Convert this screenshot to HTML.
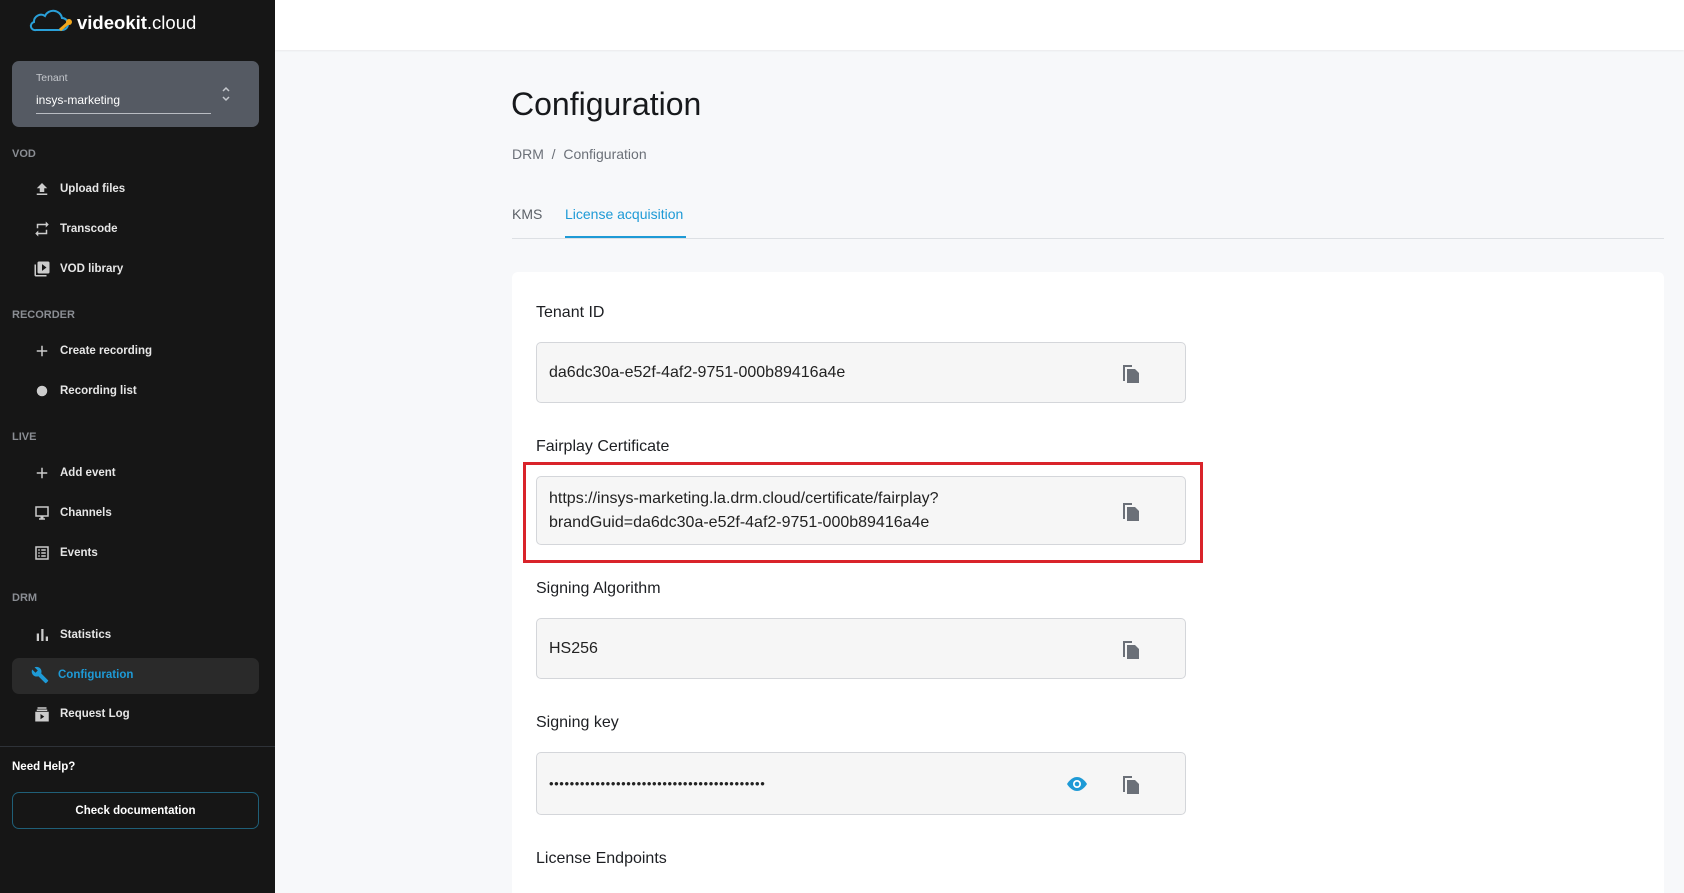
<!DOCTYPE html>
<html style="overflow:hidden;height:893px"><head><meta charset="utf-8"><style>
*{box-sizing:border-box;margin:0;padding:0}
body{width:1684px;height:893px;overflow:hidden;background:#f7f8fa;font-family:"Liberation Sans",sans-serif;position:relative}
.sb{position:absolute;left:0;top:0;width:275px;height:893px;background:#161616;color:#e8e8e8}
.a{position:absolute}
.sec{position:absolute;left:12px;font-size:11px;font-weight:bold;color:#8a8d93}
.it{position:absolute;left:60px;font-size:11.5px;font-weight:bold;color:#e6e6e6;transform:translateY(-50%)}
.ic{position:absolute;left:33px;width:18px;height:18px;transform:translateY(-50%)}
.lbl{position:absolute;left:536px;font-size:16px;color:#1d1f23;transform:translateY(-50%)}
.box{position:absolute;left:536px;width:650px;background:#f6f6f6;border:1px solid #d4d6da;border-radius:5px;font-size:16px;color:#222;padding-left:12px;display:flex;align-items:center}
.cp{position:absolute;left:1120px;width:20px;height:22px;transform:translateY(-50%)}
</style></head><body>
<div class="sb">
 <svg class="a" style="left:28px;top:8px" width="48" height="26" viewBox="0 0 48 26"><path d="M8 22 H34 A6 6 0 0 0 34 10 A9 9 0 0 0 17 8 A7 7 0 0 0 6 14 A4 4 0 0 0 8 22Z" fill="none" stroke="#2aa0d8" stroke-width="2"/><path d="M32 22 L40 15" stroke="#f2a81d" stroke-width="3"/><circle cx="41" cy="14" r="3" fill="#f2a81d"/></svg>
 <div class="a" style="left:77px;top:12px;font-size:18.5px;color:#fff"><b>videokit</b>.cloud</div>
 <div class="a" style="left:12px;top:61px;width:247px;height:66px;background:#555a63;border-radius:7px">
  <div class="a" style="left:24px;top:11px;font-size:10.5px;color:#c5c8cd">Tenant</div>
  <div class="a" style="left:24px;top:32px;font-size:12px;color:#fff">insys-marketing</div>
  <div class="a" style="left:24px;top:52px;width:175px;height:1px;background:#b9bcc2"></div>
  <svg class="a" style="left:209px;top:24px" width="10" height="18" viewBox="0 0 10 18"><path d="M2 6l3-3 3 3M2 12l3 3 3-3" fill="none" stroke="#c5c8cd" stroke-width="1.5"/></svg>
 </div>
 <div class="sec" style="top:148px">VOD</div>
 <svg class="ic" style="top:189px" viewBox="0 0 24 24"><path d="M5 20h14v-2H5zM12 4l-7 7h4v5h6v-5h4z" fill="#ccc"/></svg><div class="it" style="top:189px">Upload files</div>
 <svg class="ic" style="top:229px" viewBox="0 0 24 24"><path d="M7 7h10v3l4-4-4-4v3H5v6h2zM17 17H7v-3l-4 4 4 4v-3h12v-6h-2z" fill="#ccc"/></svg><div class="it" style="top:229px">Transcode</div>
 <svg class="ic" style="top:269px" viewBox="0 0 24 24"><path d="M4 6H2v14a2 2 0 0 0 2 2h14v-2H4zm16-4H8a2 2 0 0 0-2 2v12a2 2 0 0 0 2 2h12a2 2 0 0 0 2-2V4a2 2 0 0 0-2-2zm-8 12.5v-9l6 4.5z" fill="#ccc"/></svg><div class="it" style="top:269px">VOD library</div>
 <div class="sec" style="top:309px">RECORDER</div>
 <svg class="ic" style="top:351px" viewBox="0 0 24 24"><path d="M19 13h-6v6h-2v-6H5v-2h6V5h2v6h6z" fill="#ccc"/></svg><div class="it" style="top:351px">Create recording</div>
 <svg class="ic" style="top:391px" viewBox="0 0 24 24"><circle cx="12" cy="12" r="7" fill="#ccc"/></svg><div class="it" style="top:391px">Recording list</div>
 <div class="sec" style="top:431px">LIVE</div>
 <svg class="ic" style="top:473px" viewBox="0 0 24 24"><path d="M19 13h-6v6h-2v-6H5v-2h6V5h2v6h6z" fill="#ccc"/></svg><div class="it" style="top:473px">Add event</div>
 <svg class="ic" style="top:513px" viewBox="0 0 24 24"><path d="M21 3H3v14h7v2H8v2h8v-2h-2v-2h7zm-2 12H5V5h14z" fill="#ccc"/></svg><div class="it" style="top:513px">Channels</div>
 <svg class="ic" style="top:553px" viewBox="0 0 24 24"><path d="M3 3v18h18V3zm16 16H5V5h14zM7 7h2v2H7zm4 0h6v2h-6zm-4 4h2v2H7zm4 0h6v2h-6zm-4 4h2v2H7zm4 0h6v2h-6z" fill="#ccc"/></svg><div class="it" style="top:553px">Events</div>
 <div class="sec" style="top:592px">DRM</div>
 <svg class="ic" style="top:635px" viewBox="0 0 24 24"><path d="M5 10h3v10H5zm6-6h3v16h-3zm6 10h3v6h-3z" fill="#ccc"/></svg><div class="it" style="top:635px">Statistics</div>
 <div class="a" style="left:12px;top:658px;width:247px;height:36px;background:#2a2a2a;border-radius:7px"></div>
 <svg class="ic" style="top:675px;left:31px" viewBox="0 0 24 24"><path d="M22.7 19l-9.1-9.1c.9-2.3.4-5-1.5-6.9-2-2-5-2.4-7.4-1.3L9 6 6 9 1.6 4.7C.4 7.1.9 10.1 2.9 12.1c1.9 1.9 4.6 2.4 6.9 1.5l9.1 9.1c.4.4 1 .4 1.4 0l2.3-2.3c.5-.4.5-1.1.1-1.4z" fill="#1e9ad6"/></svg><div class="it" style="top:675px;left:58px;color:#1e9ad6">Configuration</div>
 <svg class="ic" style="top:714px" viewBox="0 0 24 24"><path d="M6 3h12v2H6zm-1 3h14v2H5zM3 9h18v13H3zm7 3v7l5-3.5z" fill="#ccc"/></svg><div class="it" style="top:714px">Request Log</div>
 <div class="a" style="left:0;top:746px;width:275px;height:1px;background:#2e3238"></div>
 <div class="a" style="left:12px;top:761px;font-size:11.5px;font-weight:bold;color:#fff">Need Help?</div>
 <div class="a" style="left:12px;top:792px;width:247px;height:37px;border:1px solid #1f5f78;border-radius:7px;font-size:11.5px;font-weight:bold;color:#fff;display:flex;align-items:center;justify-content:center">Check documentation</div>
</div>
<div class="a" style="left:275px;top:0;width:1409px;height:50px;background:#fff;box-shadow:0 1px 2px rgba(0,0,0,.06)"></div>
<div class="a" style="left:511px;top:86px;font-size:32px;color:#17191c">Configuration</div>
<div class="a" style="left:512px;top:146px;font-size:14px;color:#6b7078">DRM &nbsp;/&nbsp; Configuration</div>
<div class="a" style="left:512px;top:206px;font-size:14px;color:#5c6168">KMS</div>
<div class="a" style="left:565px;top:206px;font-size:14px;color:#1e9ad6">License acquisition</div>
<div class="a" style="left:512px;top:238px;width:1152px;height:1px;background:#dde0e4"></div>
<div class="a" style="left:565px;top:236px;width:121px;height:2px;background:#1e9ad6"></div>
<div class="a" style="left:512px;top:272px;width:1152px;height:621px;background:#fff;border-radius:6px 6px 0 0"></div>
<div class="lbl" style="top:313px">Tenant ID</div>
<div class="box" style="top:342px;height:61px">da6dc30a-e52f-4af2-9751-000b89416a4e</div>
<div class="lbl" style="top:447px">Fairplay Certificate</div>
<div class="box" style="top:476px;height:69px;line-height:24px">https://insys-marketing.la.drm.cloud/certificate/fairplay?<br>brandGuid=da6dc30a-e52f-4af2-9751-000b89416a4e</div>
<div class="a" style="left:523px;top:462px;width:680px;height:101px;border:3px solid #d9232a"></div>
<div class="lbl" style="top:589px">Signing Algorithm</div>
<div class="box" style="top:618px;height:61px">HS256</div>
<div class="lbl" style="top:723px">Signing key</div>
<div class="box" style="top:752px;height:63px;font-size:13px;letter-spacing:.6px">••••••••••••••••••••••••••••••••••••••••••</div>
<div class="lbl" style="top:859px">License Endpoints</div>
<svg class="cp" style="top:373px" viewBox="0 0 20 22"><path d="M3 3h9v2H5v14H3z" fill="#6b7078"/><path d="M7 7h8l4 4v10H7z" fill="#6b7078"/></svg>
<svg class="cp" style="top:511px" viewBox="0 0 20 22"><path d="M3 3h9v2H5v14H3z" fill="#6b7078"/><path d="M7 7h8l4 4v10H7z" fill="#6b7078"/></svg>
<svg class="cp" style="top:649px" viewBox="0 0 20 22"><path d="M3 3h9v2H5v14H3z" fill="#6b7078"/><path d="M7 7h8l4 4v10H7z" fill="#6b7078"/></svg>
<svg class="cp" style="top:784px" viewBox="0 0 20 22"><path d="M3 3h9v2H5v14H3z" fill="#6b7078"/><path d="M7 7h8l4 4v10H7z" fill="#6b7078"/></svg>
<svg class="a" style="left:1065px;top:774px" width="24" height="20" viewBox="0 0 24 20"><path d="M12 3C6 3 2 10 2 10s4 7 10 7 10-7 10-7-4-7-10-7z" fill="#1e9ad6"/><circle cx="12" cy="10" r="4" fill="#fff"/><circle cx="12" cy="10" r="2.3" fill="#1e9ad6"/></svg>
</body></html>
